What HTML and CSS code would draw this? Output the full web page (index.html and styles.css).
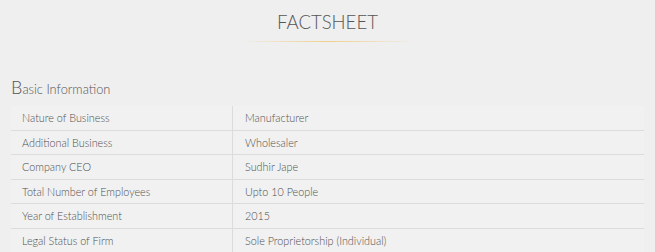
FILE: index.html
```html
<!DOCTYPE html>
<html lang="en">
<head>
<meta charset="utf-8">
<title>Factsheet</title>
<link rel="stylesheet" href="styles.css">
</head>
<body>
<div class="page">
  <header class="fs-head">
    <h1 class="fs-title">FACTSHEET</h1>
    <div class="fs-rule"></div>
  </header>
  <section class="fs-section">
    <h2 class="fs-subtitle"><span class="cap">B</span>asic Information</h2>
    <table class="fs-table">
      <tbody>
        <tr><td class="lbl">Nature of Business</td><td class="val">Manufacturer</td></tr>
        <tr><td class="lbl">Additional Business</td><td class="val">Wholesaler</td></tr>
        <tr><td class="lbl">Company CEO</td><td class="val">Sudhir Jape</td></tr>
        <tr><td class="lbl">Total Number of Employees</td><td class="val">Upto 10 People</td></tr>
        <tr><td class="lbl">Year of Establishment</td><td class="val">2015</td></tr>
        <tr><td class="lbl">Legal Status of Firm</td><td class="val">Sole Proprietorship (Individual)</td></tr>
      </tbody>
    </table>
  </section>
</div>
</body>
</html>
```

FILE: styles.css
```css
html, body {
  margin: 0;
  padding: 0;
  background: #efefef;
}
body {
  font-family: Lato, "Open Sans", sans-serif;
  color: #555;
}
.page {
  padding: 0 11px;
}
.fs-head {
  display: flex;
  flex-direction: column;
  align-items: center;
  padding-top: 10px;
}
.fs-title {
  margin: 0;
  font-size: 18.6px;
  line-height: 24px;
  font-weight: 300;
  color: #555;
}
.fs-rule {
  margin-top: 7px;
  width: 174px;
  height: 1px;
  background: linear-gradient(to right, rgba(240,200,120,0), #f0cf8a 50%, rgba(240,200,120,0));
}
.fs-section {
  padding-top: 34px;
}
.fs-subtitle {
  margin: 0 0 6px;
  font-size: 12.8px;
  line-height: 22px;
  font-weight: 300;
  color: #555;
}
.fs-subtitle .cap {
  font-size: 18px;
}
.fs-table {
  width: 100%;
  border-collapse: collapse;
  background: #f1f1f1;
  font-size: 10.8px;
  font-weight: 300;
  color: #4f4f4f;
}
.fs-table td {
  padding: 3px 11px;
  line-height: 17.5px;
  border-bottom: 1px solid #dcdcdc;
  text-align: left;
}
.fs-table .lbl {
  width: 199px;
}
.fs-table .val {
  padding-left: 12px;
  border-left: 1px solid #dcdcdc;
}
```
